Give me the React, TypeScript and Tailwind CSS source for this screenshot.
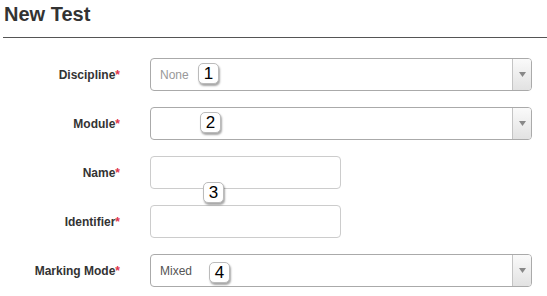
import React from 'react';

function Label({ text }: { text: string }) {
  return (
    <div className="w-[120px] shrink-0 text-right text-[12px] font-bold text-[#333]">
      {text}
      <span className="text-[#e0334a]">*</span>
    </div>
  );
}

function Select({ value, muted }: { value?: string; muted?: boolean }) {
  return (
    <div className="ml-[30px] flex h-[33px] w-[382px] overflow-hidden rounded-[4px] border border-[#aaa] bg-white">
      <div className={`flex flex-1 items-center pl-[9px] text-[12px] ${muted ? 'text-[#999]' : 'text-[#555]'}`}>
        {value}
      </div>
      <div className="flex w-[19px] items-center justify-center border-l border-[#c4c4c4] bg-gradient-to-b from-[#fafafa] to-[#e2e2e2]">
        <svg width="7" height="5" viewBox="0 0 7 5">
          <path d="M0 0h7L3.5 5z" fill="#888" />
        </svg>
      </div>
    </div>
  );
}

function Input() {
  return <div className="ml-[30px] h-[33px] w-[191px] rounded-[4px] border border-[#ccc] bg-white" />;
}

function Badge({ n, className }: { n: number; className: string }) {
  return (
    <div
      className={`absolute flex h-[21px] w-[21px] items-center justify-center rounded-[5px] border border-[#bbb] bg-white text-[17px] leading-none text-black shadow-[1px_2px_2px_rgba(0,0,0,0.35)] ${className}`}
    >
      {n}
    </div>
  );
}

export default function App() {
  return (
    <div className="relative h-[296px] w-[547px] bg-white font-['Liberation_Sans',Arial,sans-serif]">
      <div className="ml-[3px] h-[38px] border-b border-[#555] pt-[2px]">
        <h1 className="pl-[1px] text-[20px] font-bold leading-[24px] text-[#333]">New Test</h1>
      </div>

      <div className="flex flex-col gap-[16px] pt-[20px]">
        <div className="flex items-center">
          <Label text="Discipline" />
          <Select value="None" muted />
        </div>
        <div className="flex items-center">
          <Label text="Module" />
          <Select />
        </div>
        <div className="flex items-center">
          <Label text="Name" />
          <Input />
        </div>
        <div className="flex items-center">
          <Label text="Identifier" />
          <Input />
        </div>
        <div className="flex items-center">
          <Label text="Marking Mode" />
          <Select value="Mixed" />
        </div>
      </div>

      {/* step annotations */}
      <Badge n={1} className="left-[198px] top-[63px]" />
      <Badge n={2} className="left-[200px] top-[112px]" />
      <Badge n={3} className="left-[203px] top-[182px]" />
      <Badge n={4} className="left-[209px] top-[262px]" />
    </div>
  );
}
